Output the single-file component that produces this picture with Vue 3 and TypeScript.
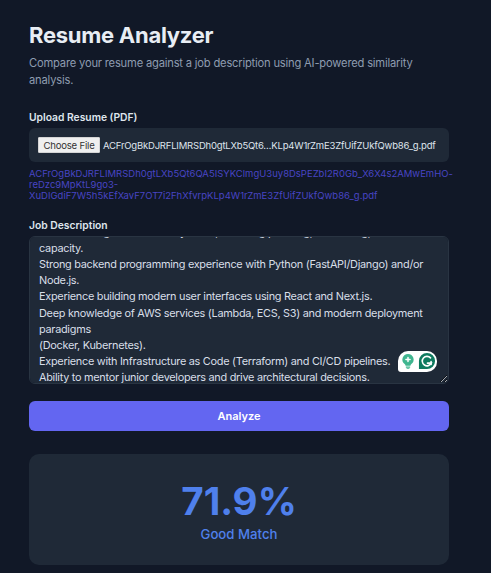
<script setup lang="ts">
import { onMounted, ref } from 'vue'

const box = ref<HTMLTextAreaElement | null>(null)
const jobText = `Own the design of scalable systems, including planning, monitoring, and
capacity.
Strong backend programming experience with Python (FastAPI/Django) and/or
Node.js.
Experience building modern user interfaces using React and Next.js.
Deep knowledge of AWS services (Lambda, ECS, S3) and modern deployment
paradigms
(Docker, Kubernetes).
Experience with Infrastructure as Code (Terraform) and CI/CD pipelines.
Ability to mentor junior developers and drive architectural decisions.
Excellent communication skills.`

onMounted(() => {
  if (box.value) box.value.scrollTop = 22
})
</script>

<template>
  <main class="page">
    <h1 class="title">Resume Analyzer</h1>
    <p class="subtitle">Compare your resume against a job description using AI-powered similarity analysis.</p>

    <section class="field upload">
      <label class="label">Upload Resume (PDF)</label>
      <div class="file-box">
        <button class="choose" type="button">Choose File</button>
        <span class="file-name">ACFrOgBkDJRFLIMRSDh0gtLXb5Qt6…KLp4W1rZmE3ZfUifZUkfQwb86_g.pdf</span>
      </div>
      <p class="file-path">ACFrOgBkDJRFLIMRSDh0gtLXb5Qt6QA5ISYKClmgU3uy8DsPEZbI2R0Gb_X6X4s2AMwEmHO-reDzc9MpKtL9go3-XuDIGdiF7W5h5kEfXavF7OT7i2FhXfvrpKLp4W1rZmE3ZfUifZUkfQwb86_g.pdf</p>
    </section>

    <section class="field job">
      <label class="label">Job Description</label>
      <div class="text-wrap">
        <textarea ref="box" class="text" :value="jobText" spellcheck="false"></textarea>
        <div class="grammarly">
          <svg width="14" height="17" viewBox="0 0 15 18">
            <path d="M7.5 1a6 6 0 0 0-3.6 10.8c.6.5.9 1.1 1 1.7h5.2c.1-.6.4-1.2 1-1.7A6 6 0 0 0 7.5 1z" fill="#3fb58f" />
            <path d="M5.2 14.4h4.6v1.2H5.2zM6 16.2h3v.9H6z" fill="#3fb58f" />
            <path d="M7.5 4.6v4.4M5.3 6.8h4.4" stroke="#fff" stroke-width="1.6" stroke-linecap="round" />
          </svg>
          <svg width="18" height="18" viewBox="0 0 19 19">
            <path d="M9.5 1a8.5 8.5 0 1 1 0 17H1v-8.5A8.5 8.5 0 0 1 9.5 1z" fill="#0f7a5f" />
            <path d="M13.2 6.2a5 5 0 1 0 .8 5.6H10" fill="none" stroke="#fff" stroke-width="1.7" stroke-linecap="round" />
            <path d="M13.8 10.2v3" stroke="#fff" stroke-width="1.7" stroke-linecap="round" />
          </svg>
        </div>
      </div>
    </section>

    <button class="analyze" type="button">Analyze</button>

    <section class="result">
      <div class="score">71.9%</div>
      <div class="verdict">Good Match</div>
    </section>
  </main>
</template>

<style>
html, body {
  margin: 0;
  background: #111827;
}
</style>

<style scoped>
.page {
  box-sizing: border-box;
  width: 491px;
  height: 573px;
  overflow: hidden;
  padding: 21px 42px 0 29px;
  background: #111827;
  font-family: Inter, "Liberation Sans", sans-serif;
  color: #e2e8f0;
}
.title {
  margin: 0;
  font-size: 22px;
  line-height: 28px;
  letter-spacing: -0.27px;
  font-weight: 700;
  color: #e8edf4;
}
.subtitle {
  margin: 5.5px 0 0;
  font-size: 11.2px;
  line-height: 17px;
  letter-spacing: -0.2px;
  color: #8e9cb0;
}
.field {
  display: flex;
  flex-direction: column;
}
.upload {
  margin-top: 21.5px;
}
.label {
  font-size: 10.3px;
  line-height: 14px;
  font-weight: 600;
  color: #dfe5ed;
}
.file-box {
  display: flex;
  align-items: center;
  gap: 3px;
  box-sizing: border-box;
  height: 34px;
  margin-top: 4px;
  padding: 0 9px;
  border-radius: 6px;
  background: #1f2937;
}
.choose {
  box-sizing: border-box;
  width: 62px;
  height: 16px;
  padding: 0;
  border: 1px solid #d4d4d4;
  border-radius: 1px;
  background: #efefef;
  color: #333;
  font: 9.6px Inter, "Liberation Sans", sans-serif;
  letter-spacing: -0.2px;
  white-space: nowrap;
}
.file-name {
  font-size: 9.5px;
  line-height: 15px;
  letter-spacing: -0.2px;
  color: #dfe5ed;
  white-space: nowrap;
}
.file-path {
  margin: 6px -6px 0 0;
  font-size: 9.5px;
  line-height: 11.2px;
  color: #4845c4;
}
.job {
  margin-top: 16px;
}
.text-wrap {
  position: relative;
  margin-top: 4px;
}
.text {
  display: block;
  box-sizing: border-box;
  width: 420px;
  height: 148px;
  padding: 9px;
  border: 1px solid #293442;
  border-radius: 6px;
  outline: none;
  background: #1f2937;
  color: #d8dfe8;
  font-family: Inter, "Liberation Sans", sans-serif;
  font-size: 10.9px;
  line-height: 16.2px;
  letter-spacing: -0.28px;
  scrollbar-width: none;
  resize: vertical;
}
.grammarly {
  position: absolute;
  right: 12px;
  bottom: 12px;
  display: flex;
  align-items: center;
  gap: 3px;
  box-sizing: border-box;
  width: 39px;
  height: 21px;
  padding: 0 1px 0 3px;
  border-radius: 10px 10px 10px 3px;
  background: #fff;
}
.analyze {
  display: block;
  width: 420px;
  height: 30px;
  margin-top: 17.5px;
  padding: 0;
  border: none;
  border-radius: 6px;
  background: #6366f1;
  color: #fff;
  font-family: Inter, "Liberation Sans", sans-serif;
  font-size: 11px;
  font-weight: 600;
}
.result {
  box-sizing: border-box;
  height: 111px;
  margin-top: 23px;
  padding-top: 25px;
  border-radius: 10px;
  background: #1f2937;
  text-align: center;
}
.score {
  font-size: 38.5px;
  line-height: 44px;
  font-weight: 700;
  color: #4f80ec;
}
.verdict {
  margin-top: 2px;
  font-size: 13.2px;
  line-height: 18px;
  font-weight: 500;
  color: #4f80ec;
}
</style>
